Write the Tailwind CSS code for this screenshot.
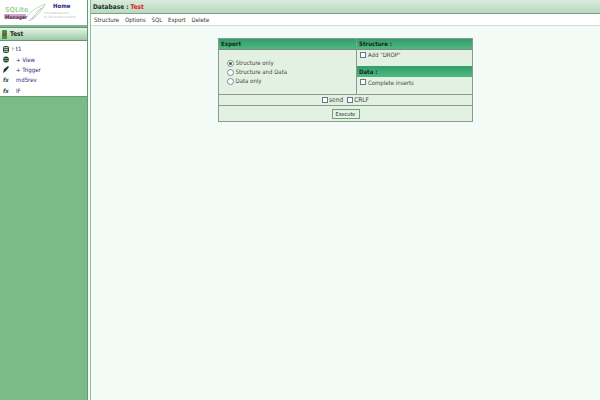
<!DOCTYPE html>
<html><head><script src="https://cdn.jsdelivr.net/npm/@tailwindcss/browser@4"></script></head>
<body class="m-0">
<div class="w-[600px] h-[400px] overflow-hidden flex bg-[#f3fbf6] font-['DejaVu_Sans',sans-serif] font-stretch-condensed text-[6px] leading-[8px] text-[#333]">
  <aside class="w-[88px] shrink-0 flex flex-col bg-[#7dba89] border-r border-[#5f9e70]">
    <div class="h-[25px] bg-white flex relative">
      <svg width="50" height="25" viewBox="0 0 50 25" class="shrink-0">
        <path d="M29 21 L45 5 M32 19 L41 8 M27 16 C32 10 38 7 45 4 M29 21 C36 18 41 12 45 4" stroke="#b4ccb4" stroke-width="0.8" fill="none"/>
        <rect x="4" y="14" width="22" height="5" rx="1" fill="#cfa6ca"/>
        <text x="5" y="12" font-size="7" font-weight="bold" fill="#a5d3a5" font-family="DejaVu Sans">SQLite</text>
        <text x="5" y="18.5" font-size="5" font-weight="bold" fill="#5a3a55" font-family="DejaVu Sans">Manager</text>
      </svg>
      <div class="flex flex-col items-start">
        <span class="font-bold text-[#2a2a8c] text-[6px] mt-[2px] ml-[3px]">Home</span>
        <span class="text-[3px] leading-[4px] text-[#bbb] mt-[1px] whitespace-nowrap -ml-[6px]">free database tool<br>by SQLite Administrator</span>
      </div>
    </div>
    <div class="h-[14px] mt-[2px] flex items-center gap-[3px] pl-[2px] border-y border-[#6f8f78] bg-linear-to-b from-[#e6f4e6] to-[#9dcba5] font-bold text-[#1d2d1d] text-[6.5px]">
      <span class="w-[5px] h-[9px] rounded-[1px] bg-[#2f9a4c] flex items-center justify-center"><span class="w-[3px] h-[3px] bg-[#b03a20]"></span></span>Test
    </div>
    <ul class="bg-white h-[56px] pt-[3px] flex flex-col border-b border-[#5f9e70] text-[#2a2a7c]">
      <li class="h-[10.4px] flex items-center pl-[3px]"><svg width="6" height="7" viewBox="0 0 6 7" class="mr-[3px]"><rect x="0.5" y="0.5" width="5" height="6" rx="1" fill="#9fc4a8" stroke="#1f4a2c"/><path d="M1 2.5H5M1 4.5H5" stroke="#1f4a2c" stroke-width="0.7"/></svg><span class="text-[#555] mr-[1px]">⊦</span>t1</li>
      <li class="h-[10.4px] flex items-center pl-[3px]"><svg width="6" height="7" viewBox="0 0 6 7" class="mr-[7px]"><circle cx="3" cy="3.5" r="3" fill="#1f4a2c"/><path d="M0 2.5H6M0 4.5H6" stroke="#a9cdb2" stroke-width="0.6"/></svg>+ View</li>
      <li class="h-[10.4px] flex items-center pl-[3px]"><svg width="6" height="7" viewBox="0 0 6 7" class="mr-[7px]"><path d="M0 7 L1 3 L5 0 L6 1 L3 5 Z" fill="#173f24"/></svg>+ Trigger</li>
      <li class="h-[10.4px] flex items-center pl-[3px]"><span class="w-[8px] text-[6px] font-bold italic text-[#1f5a32] mr-[5px]">fx</span>md5rev</li>
      <li class="h-[10.4px] flex items-center pl-[3px]"><span class="w-[8px] text-[6px] font-bold italic text-[#1f5a32] mr-[5px]">fx</span>IF</li>
    </ul>
  </aside>
  <main class="flex-1 flex flex-col ml-[2px] border-l border-[#9ab8a2]">
    <div class="h-[14px] flex items-center pl-[2px] bg-linear-to-b from-[#d8ecdc] to-[#b9d9c1] font-bold text-[#1c3326] text-[6.5px] border-b border-[#7f9e88]">Database :&nbsp;<span class="text-[#e01818]">Test</span></div>
    <nav class="h-[12px] flex items-center gap-[5.8px] pl-[3px] bg-white border-b border-[#cfe3d5] text-[6px] text-[#333]">
      <span>Structure</span><span>Options</span><span>SQL</span><span>Export</span><span>Delete</span>
    </nav>
    <div class="flex-1 pt-[12px] pl-[127px]">
      <div class="w-[255px] h-[84px] grid grid-cols-[138px_1fr] grid-rows-[55px_11px_1fr] border border-[#8a9a8e] bg-[#e3f1e3]">
        <div class="border-r border-[#8a9a8e] flex flex-col">
          <div class="h-[11px] flex items-center pl-[2px] font-bold text-[#14281c] bg-linear-to-b from-[#2f9e68] to-[#50b883] border-b border-[#7a8a7e]">Export</div>
          <div class="flex flex-col pt-[9px] pl-[8px] gap-[1.2px] text-[#444]">
            <label class="flex items-center gap-[1.5px] h-[8px]"><span class="w-[7px] h-[7px] rounded-full border border-[#7a8a9a] bg-white flex items-center justify-center"><span class="w-[3px] h-[3px] rounded-full bg-[#2a6a3a]"></span></span>Structure only</label>
            <label class="flex items-center gap-[1.5px] h-[8px]"><span class="w-[7px] h-[7px] rounded-full border border-[#7a8a9a] bg-white"></span>Structure and Data</label>
            <label class="flex items-center gap-[1.5px] h-[8px]"><span class="w-[7px] h-[7px] rounded-full border border-[#7a8a9a] bg-white"></span>Data only</label>
          </div>
        </div>
        <div class="flex flex-col">
          <div class="h-[11px] flex items-center pl-[2px] font-bold text-[#14281c] bg-linear-to-b from-[#2f9e68] to-[#50b883] border-b border-[#7a8a7e]">Structure :</div>
          <label class="h-[16px] flex items-start gap-[2px] pl-[3px] pt-[1px] text-[#444]"><span class="w-[6px] h-[6px] border border-[#66778a] bg-white mt-[1px]"></span>Add "DROP"</label>
          <div class="h-[11px] flex items-center pl-[2px] font-bold text-[#14281c] bg-linear-to-b from-[#2f9e68] to-[#50b883]">Data :</div>
          <label class="flex items-start gap-[2px] pl-[3px] pt-[2px] text-[#444]"><span class="w-[6px] h-[6px] border border-[#66778a] bg-white"></span>Complete inserts</label>
        </div>
        <div class="col-span-2 flex items-center justify-center gap-[4px] border-t border-[#8a9a8e] text-[#444] text-[6.5px]">
          <label class="flex items-center gap-[1px]"><span class="w-[6px] h-[6px] border border-[#66778a] bg-white"></span>send</label>
          <label class="flex items-center gap-[1px]"><span class="w-[6px] h-[6px] border border-[#66778a] bg-white"></span>CRLF</label>
        </div>
        <div class="col-span-2 flex items-center justify-center border-t border-[#8a9a8e]">
          <button class="h-[10px] w-[28px] flex items-center justify-center border border-[#7a9a7e] bg-[#e3f3e3] text-[5.5px] text-[#222]">Execute</button>
        </div>
      </div>
    </div>
  </main>
</div>
</body></html>
